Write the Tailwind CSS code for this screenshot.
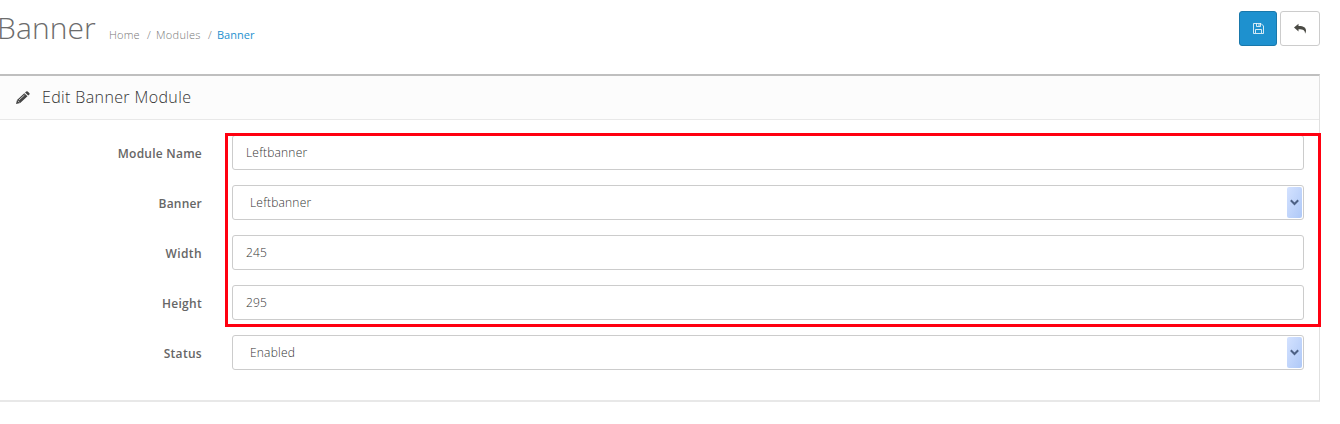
<!DOCTYPE html>
<html lang="en">
<head>
<meta charset="utf-8">
<title>Banner</title>
<script src="https://cdn.jsdelivr.net/npm/@tailwindcss/browser@4"></script>
</head>
<body class="bg-white h-[424px] overflow-hidden font-['Open_Sans',sans-serif] text-xs text-[#666]">
<header class="flex h-[74px] items-start justify-between pr-5">
  <div class="flex items-baseline pt-2">
    <h1 class="-ml-[3px] w-[112px] text-[30px] leading-10 font-light text-[#6c6c6c] whitespace-nowrap tracking-[.1px]">Banner</h1>
    <nav class="flex items-baseline text-[11px] font-light text-[#777] whitespace-nowrap">
      <span class="w-[38px] tracking-[.15px]">Home</span><span class="w-[9px]">/</span><span class="w-[52px] tracking-[.3px]">Modules</span><span class="w-[9px]">/</span><span class="font-normal text-[#1e91cf]">Banner</span>
    </nav>
  </div>
  <div class="flex gap-[3px] pt-[11px]">
    <button class="flex h-[35px] w-[38px] items-center justify-center rounded-[3px] border border-[#1978ab] bg-[#1e91cf] text-white/80">
      <svg class="h-[11px] w-[11px]" viewBox="0 0 11 11" fill="none" stroke="currentColor"><path d="M.5.5H8L10.500 3v7.500H.5zM2.500 10V6.500h6V10M3.500.5v3h4v-3M6 1v2"/></svg>
    </button>
    <button class="flex h-[35px] w-10 items-center justify-center rounded-[3px] border border-[#ccc] bg-white text-[#4a4a44]">
      <svg class="h-3 w-3" viewBox="0 0 12 12" fill="currentColor"><path d="M0 4.500 4.500.7v2.200C9.500 2.800 12 4.500 12 7.500c0 1.400-.4 2.400-1 3.300.3-3.200-1.500-4.500-6.500-4.500v2.300z"/></svg>
    </button>
  </div>
</header>
<main class="relative h-[328px] w-[1320px] border-t-2 border-r border-b-2 border-t-[#bfbfbf] border-r-[#e0e0e0] border-b-[#e8e8e8]">
  <div class="flex h-11 items-center border-b border-[#e8e8e8] bg-[#fcfcfc] pl-4">
    <svg class="h-[13px] w-[14px] text-[#444]" viewBox="0 0 14 13" fill="currentColor"><path d="M0 13 1 9 8.300 2.200 11.500 5.200 4.200 12zM9 1.500 10.300.4Q11 0 11.700.5L13.500 2.200Q14 2.900 13.400 3.500L12.200 4.600z"/><path d="m1.700 9.600 1.800 1.700M3 9l5.500-5" stroke="#fcfcfc" stroke-width=".7"/></svg>
    <h2 class="ml-3 pb-[2px] text-base font-light tracking-[.37px] text-[#333] whitespace-nowrap">Edit Banner Module</h2>
  </div>
  <form class="flex flex-col gap-[15px] pt-[15px]">
    <div class="flex h-[35px]"><label class="w-[202px] pt-[11px] text-right font-semibold tracking-[.24px]">Module Name</label><div class="ml-[30px] flex w-[1072px] items-center rounded-[3px] border border-[#ccc] pl-[13px] font-light tracking-[.2px] text-[#333]">Leftbanner</div></div>
    <div class="flex h-[35px]"><label class="w-[202px] pt-[11px] text-right font-semibold tracking-[.2px]">Banner</label><div class="ml-[30px] flex w-[1072px] items-center justify-between rounded-[3px] border border-[#ccc] pr-px pl-[17px] font-light text-[#333]"><span class="pt-px tracking-[.2px]">Leftbanner</span><span class="flex h-[31px] w-[15px] items-center justify-center rounded-[2px] bg-linear-to-br from-[#d4e2ff] to-[#aec8f7]"><svg class="h-[7px] w-[9px]" viewBox="0 0 9 7" fill="none" stroke="#4d6185" stroke-width="2"><path d="m.8 1.300 3.700 3.700 3.700-3.700"/></svg></span></div></div>
    <div class="flex h-[35px]"><label class="w-[202px] pt-[11px] text-right font-semibold tracking-[.4px]">Width</label><div class="ml-[30px] flex w-[1072px] items-center rounded-[3px] border border-[#ccc] pl-[13px] font-light tracking-[.15px] text-[#333]">245</div></div>
    <div class="flex h-[35px]"><label class="w-[202px] pt-[11px] text-right font-semibold tracking-[.3px]">Height</label><div class="ml-[30px] flex w-[1072px] items-center rounded-[3px] border border-[#ccc] pl-[13px] font-light tracking-[.15px] text-[#333]">295</div></div>
    <div class="flex h-[35px]"><label class="w-[202px] pt-[11px] text-right font-semibold tracking-[.3px]">Status</label><div class="ml-[30px] flex w-[1072px] items-center justify-between rounded-[3px] border border-[#ccc] pr-px pl-[17px] font-light text-[#333]"><span class="pt-px tracking-[.2px]">Enabled</span><span class="flex h-[31px] w-[15px] items-center justify-center rounded-[2px] bg-linear-to-br from-[#d4e2ff] to-[#aec8f7]"><svg class="h-[7px] w-[9px]" viewBox="0 0 9 7" fill="none" stroke="#4d6185" stroke-width="2"><path d="m.8 1.300 3.700 3.700 3.700-3.700"/></svg></span></div></div>
  </form>
  <div class="pointer-events-none absolute top-[57px] left-[225px] h-[194px] w-[1096px] border-3 border-[#ff0010]"></div>
</main>
</body>
</html>
